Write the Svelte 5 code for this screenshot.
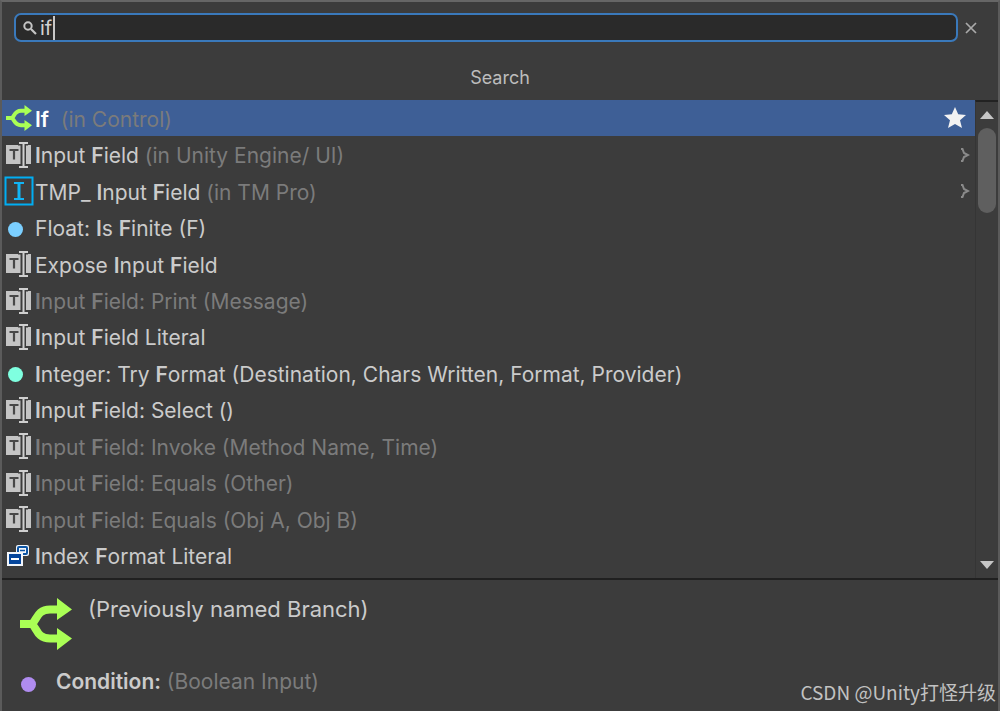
<script>
  let query = $state('if');
  let selected = $state(0);

  // Asterisks surround the letters matched by the query.
  const items = [
    { icon: 'branch', name: '*If*', hint: '\u00a0(in Control)', star: true },
    { icon: 'field', name: '*I*nput *F*ield', hint: '(in Unity Engine/ UI)', more: true },
    { icon: 'tmp', name: 'TMP_ *I*nput *F*ield', hint: '(in TM Pro)', more: true },
    { icon: 'dot', color: '#7bcfff', name: 'Float: *I*s *F*inite (F)' },
    { icon: 'field', name: 'Expose *I*nput *F*ield' },
    { icon: 'field', name: '*I*nput *F*ield: Print (Message)', dim: true },
    { icon: 'field', name: '*I*nput *F*ield Literal' },
    { icon: 'dot', color: '#7fffe0', name: '*I*nteger: Try *F*ormat (Destination, Chars Written, Format, Provider)' },
    { icon: 'field', name: '*I*nput *F*ield: Select ()' },
    { icon: 'field', name: '*I*nput *F*ield: Invoke (Method Name, Time)', dim: true },
    { icon: 'field', name: '*I*nput *F*ield: Equals (Other)', dim: true },
    { icon: 'field', name: '*I*nput *F*ield: Equals (Obj A, Obj B)', dim: true },
    { icon: 'enum', name: '*I*ndex *F*ormat Literal' }
  ];
</script>

{#snippet branch()}
  <svg class="branch" viewBox="0 0 52 52" aria-hidden="true">
    <path d="M0 26H12C17 22 17 11.500 30 11.500H39M12 26C17 30 17 40.500 30 40.500H39" fill="none" stroke="#aaff55" stroke-width="8" />
    <path d="M37 0L52 11.500L37 22ZM37 30L52 40.500L37 52Z" fill="#aaff55" />
  </svg>
{/snippet}

<main class="finder">
  <header>
    <div class="search-row">
      <label class="search">
        <svg width="14" height="14" viewBox="0 0 14 14" aria-hidden="true">
          <circle cx="5" cy="5" r="3.700" fill="none" stroke="#c4c4c4" stroke-width="2" />
          <path d="M8 8L13 13" stroke="#c4c4c4" stroke-width="2.200" />
        </svg>
        <span class="entry">
          <input type="text" aria-label="Search" bind:value={query} />
          <span class="caret"></span>
        </span>
      </label>
      <button class="clear" aria-label="Clear" onclick={() => (query = '')}>
        <svg width="12" height="12" viewBox="0 0 12 12"><path d="M1 1L11 11M11 1L1 11" stroke="#aaa" stroke-width="1.700" /></svg>
      </button>
    </div>
    <h1>Search</h1>
  </header>

  <section class="results">
    <div class="list">
      {#each items as item, i}
        <button class="row" class:selected={selected === i} class:dim={item.dim} onclick={() => (selected = i)}>
          <span class="icon">
            {#if item.icon === 'branch'}
              {@render branch()}
            {:else if item.icon === 'field'}
              <svg width="26" height="26" viewBox="0 0 26 26" aria-hidden="true">
                <path d="M0 3H15V22H0Z M20 3H25V22H20Z" fill="#c4c4c4" />
                <path d="M3.500 8H12.500M8 8V17.500" stroke="#484848" stroke-width="2.200" fill="none" />
                <path d="M12 1H22M17 1V25M12 25H22" stroke="#3c3c3c" stroke-width="5" />
                <path d="M13 1H22M17.500 1V25M13 25H22" stroke="#cfcfcf" stroke-width="2" />
              </svg>
            {:else if item.icon === 'tmp'}
              <svg class="tmp" width="30" height="30" viewBox="0 0 30 30" aria-hidden="true">
                <rect x="1.500" y="1.500" width="27" height="27" fill="#3f3c3c" stroke="#00aef3" stroke-width="2" />
                <path d="M10 7H20M10 23H20" stroke="#12b4f5" stroke-width="2" />
                <path d="M15 7V23" stroke="#12b4f5" stroke-width="3" />
              </svg>
            {:else if item.icon === 'dot'}
              <i class="dot" style:background={item.color}></i>
            {:else}
              <svg class="enum" width="24" height="22" viewBox="0 0 24 22" aria-hidden="true">
                <rect x="9" y="0" width="13" height="11" rx="2" fill="#f2f5fa" />
                <rect x="11" y="2" width="9" height="7" rx="1" fill="#f2f5fa" stroke="#0c55a5" stroke-width="2" />
                <path d="M13 5.500H18" stroke="#0c55a5" stroke-width="1.500" />
                <rect x="0" y="7" width="16" height="14" fill="#f2f5fa" />
                <rect x="2" y="9" width="12" height="10" fill="#05469c" />
                <path d="M4 14H12" stroke="#fff" stroke-width="2" />
              </svg>
            {/if}
          </span>
          <span class="name">{#each item.name.split('*') as part, n}{#if n % 2}<b>{part}</b>{:else}{part}{/if}{/each}{#if item.hint}<span class="hint">&nbsp;{item.hint}</span>{/if}</span>
          {#if item.star}
            <svg class="star" width="22" height="22" viewBox="0 0 22 22" aria-hidden="true"><path d="M11 0L14.200 7.300L22 8L16 13.300L18 21L11 17L4 21L6 13.300L0 8L7.800 7.300Z" fill="#f2f2f2" /></svg>
          {:else if item.more}
            <svg class="more" width="10" height="14" viewBox="0 0 10 14" aria-hidden="true"><path d="M1 1H2.500L4 5L8 7L4 9L2.500 13H1" fill="none" stroke="#8a8a8a" stroke-width="2" /></svg>
          {/if}
        </button>
      {/each}
    </div>
    <div class="scrollbar">
      <button aria-label="Scroll up"><svg width="14" height="8" viewBox="0 0 14 8"><path d="M7 0L14 8H0Z" fill="#c6c6c6" /></svg></button>
      <div class="track"><div class="thumb"></div></div>
      <button aria-label="Scroll down"><svg width="14" height="8" viewBox="0 0 14 8"><path d="M0 0H14L7 8Z" fill="#c6c6c6" /></svg></button>
    </div>
  </section>

  <footer>
    <div class="summary">
      {@render branch()}
      <p>(Previously named Branch)</p>
    </div>
    <p class="port"><i class="dot"></i><span><strong>Condition:</strong> <span class="type">(Boolean Input)</span></span></p>
    <small>CSDN @Unity打怪升级</small>
  </footer>
</main>

<style>
  :global(body) {
    margin: 0;
    background: #3c3c3c;
  }
  .finder {
    box-sizing: border-box;
    min-height: 100vh;
    display: flex;
    flex-direction: column;
    border: 2px solid #5b5b5b;
    border-top-color: #666;
    border-bottom: 0;
    background: #3c3c3c;
    color: #cbcbcb;
    font: 21px/28px Inter, "Noto Sans CJK SC", sans-serif;
  }
  button {
    border: 0;
    padding: 0;
    background: none;
    color: inherit;
    font: inherit;
  }
  svg {
    display: block;
    flex: none;
  }
  p, h1 {
    margin: 0;
  }
  .search-row {
    display: flex;
    align-items: center;
    gap: 7px;
    padding: 11px 21px 0 12px;
  }
  .search {
    box-sizing: border-box;
    flex: 1;
    height: 29px;
    display: flex;
    align-items: center;
    gap: 3px;
    padding: 0 7px;
    border: 2px solid #3a79bb;
    border-radius: 7px;
    background: #2a2a2a;
  }
  .entry {
    position: relative;
    flex: 1;
    display: flex;
  }
  input {
    width: 100%;
    height: 24px;
    box-sizing: border-box;
    padding: 0;
    border: 0;
    outline: 0;
    background: none;
    color: #d2d2d2;
    font: 20px/24px Inter, sans-serif;
  }
  .caret {
    position: absolute;
    left: 13px;
    top: 0;
    width: 2px;
    height: 24px;
    background: #c8c8c8;
  }
  h1 {
    padding: 25px 0 11px;
    text-align: center;
    font-size: 18px;
    line-height: 22px;
    font-weight: 400;
    color: #bdbdbd;
  }
  .results {
    flex: 1;
    display: flex;
    border-bottom: 2px solid #202020;
  }
  .list {
    flex: 1;
    display: grid;
    grid-template-rows: repeat(13, minmax(36px, 1fr));
    padding-bottom: 4px;
  }
  .row {
    display: flex;
    align-items: center;
    padding: 0 9px 0 2px;
    text-align: left;
    white-space: nowrap;
  }
  .icon {
    width: 31px;
    display: flex;
    flex: none;
    padding-left: 2px;
    box-sizing: border-box;
  }
  .icon .branch {
    width: 26px;
    height: 26px;
  }
  .icon .tmp {
    margin-left: -2px;
  }
  .icon .enum {
    margin-left: 1px;
  }
  .name {
    flex: 1;
    padding-top: 3px;
  }
  b {
    font-weight: 600;
  }
  .dim, .hint, .type {
    color: #7b7b7b;
  }
  .selected {
    background: #3e5f96;
    color: #fff;
  }
  .more {
    margin-right: -4px;
  }
  .dot {
    flex: none;
    width: 15px;
    height: 15px;
    border-radius: 50%;
    margin: 3px 0 0 2px;
    background: #b08cf0;
  }
  .scrollbar {
    box-sizing: border-box;
    width: 23px;
    display: flex;
    flex-direction: column;
    border-left: 1px solid #353535;
    border-top: 2px solid #222;
  }
  .scrollbar button {
    height: 26px;
    display: grid;
    place-items: center;
  }
  .track {
    flex: 1;
    padding: 0 2px;
  }
  .thumb {
    height: 20%;
    border-radius: 9px;
    background: #5f5f5f;
  }
  footer {
    position: relative;
    padding: 15px 18px 15px;
  }
  .summary {
    display: flex;
    gap: 16px;
    font-size: 22px;
  }
  .summary .branch {
    width: 52px;
    height: 52px;
    margin-top: 3px;
  }
  .port {
    display: flex;
    align-items: center;
    gap: 20px;
    margin-top: 18px;
  }
  .port .dot {
    margin: 5px 0 0 1px;
  }
  strong {
    font-weight: 600;
  }
  small {
    position: absolute;
    right: 2px;
    bottom: 5px;
    font: 19px/28px "Noto Sans CJK SC", sans-serif;
    color: #c2c2c2;
  }
</style>
